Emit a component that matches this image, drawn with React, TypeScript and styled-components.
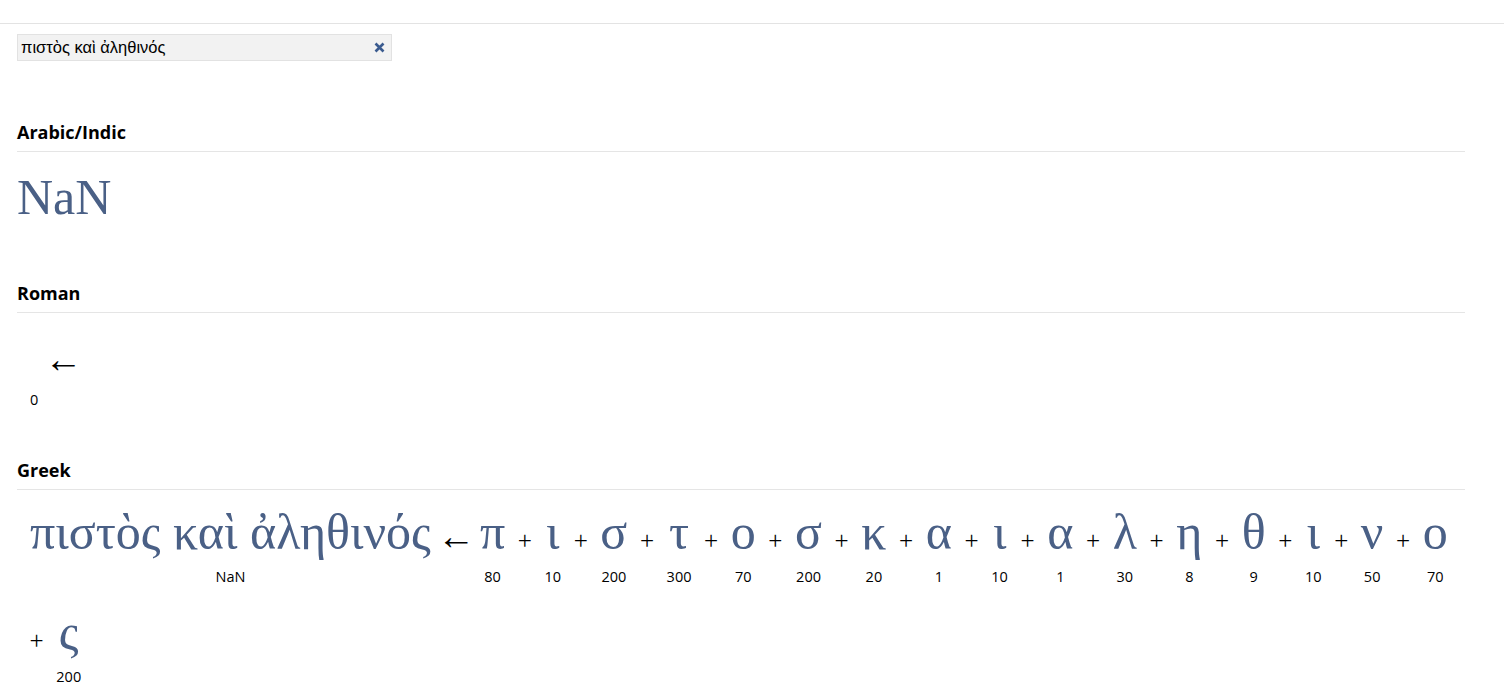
import React from "react";
import styled, { createGlobalStyle } from "styled-components";

const Global = createGlobalStyle`
  html, body { margin: 0; padding: 0; background: #fff; overflow: hidden; }
  body { font-family: "Open Sans", "Noto Sans", sans-serif; color: #000; }
`;

const TopBar = styled.header`
  height: 23px;
  border-bottom: 1px solid #e3e3e3;
`;

const Main = styled.main`
  display: flex;
  flex-direction: column;
  padding: 0 39px 0 17px;
`;

const SearchBox = styled.div`
  display: flex;
  align-items: center;
  width: 375px;
  height: 27px;
  box-sizing: border-box;
  margin: 10px 0 21px;
  padding: 0 6px 0 3px;
  background: #f2f2f2;
  border: 1px solid #e2e2e2;
`;

const SearchInput = styled.input`
  flex: 1;
  min-width: 0;
  border: 0;
  padding: 0;
  background: transparent;
  outline: none;
  font: 16.5px "Liberation Sans", Arial, sans-serif;
  color: #000;
`;

const ClearButton = styled.button`
  display: flex;
  align-items: center;
  justify-content: center;
  width: 12px;
  height: 12px;
  padding: 0;
  border: 0;
  background: transparent;
  color: #3b5b8f;
  cursor: pointer;
`;

const Heading = styled.h2`
  margin: 38px 0 0;
  padding: 0 0 7px;
  font: 700 18px/24px "Open Sans", "Noto Sans", sans-serif;
  border-bottom: 1px solid #e5e5e5;
`;

const BigValue = styled.div`
  margin: 10px 0 11px;
  font: 50px/70px "Liberation Serif", "DejaVu Serif", serif;
  color: #4a6086;
`;

const Row = styled.div`
  display: flex;
  flex-wrap: wrap;
  align-items: flex-start;
  row-gap: 10px;
  margin: 7px 0 10px;
`;

const Item = styled.div<{ $pad?: string }>`
  display: flex;
  flex-direction: column;
  align-items: center;
  padding: ${(p) => p.$pad ?? "0"};
`;

const Glyph = styled.span`
  display: block;
  height: 70px;
  font: 50px/70px "Liberation Serif", "DejaVu Serif", serif;
  color: #4a6086;
  white-space: pre;
`;

const OpMark = styled.span<{ $size: number }>`
  font-family: "Liberation Serif", serif;
  font-size: ${(p) => p.$size}px;
  line-height: 1;
  color: #000;
`;

const Label = styled.span`
  display: block;
  height: 20px;
  font: 14.5px/20px "Open Sans", "Noto Sans", sans-serif;
  color: #000;
`;

const letters: [string, number][] = [
  ["π", 80], ["ι", 10], ["σ", 200], ["τ", 300], ["ο", 70], ["σ", 200],
  ["κ", 20], ["α", 1], ["ι", 10], ["α", 1], ["λ", 30], ["η", 8],
  ["θ", 9], ["ι", 10], ["ν", 50], ["ο", 70], ["ς", 200],
];

const Op = ({ mark, size, pad }: { mark: string; size: number; pad: string }) => (
  <Item $pad={pad}>
    <Glyph>
      <OpMark $size={size}>{mark}</OpMark>
    </Glyph>
  </Item>
);

const Arrow = () => <Op mark="←" size={38} pad="0 5px 0 6px" />;
const Plus = () => <Op mark="+" size={25} pad="0 12.6px" />;

const Word = ({ text, value }: { text: string; value: string }) => (
  <Item $pad="0 0 0 13px">
    <Glyph>{text}</Glyph>
    <Label>{value}</Label>
  </Item>
);

const Letter = ({ ch, value }: { ch: string; value: number }) => (
  <Item>
    <Glyph>{ch}</Glyph>
    <Label>{value}</Label>
  </Item>
);

export default function App() {
  const word = "πιστὸς καὶ ἀληθινός";
  return (
    <>
      <Global />
      <TopBar />
      <Main>
        <SearchBox>
          <SearchInput defaultValue={word} />
          <ClearButton aria-label="clear">
            <svg width="11" height="11" viewBox="0 0 11 11">
              <path d="M1.5 1.5 L9.5 9.5 M9.5 1.5 L1.5 9.5" stroke="currentColor" strokeWidth="2.6" strokeLinecap="butt" />
            </svg>
          </ClearButton>
        </SearchBox>

        <Heading>Arabic/Indic</Heading>
        <BigValue>NaN</BigValue>

        <Heading>Roman</Heading>
        <Row>
          <Word text="" value="0" />
          <Arrow />
        </Row>

        <Heading>Greek</Heading>
        <Row>
          <Word text={word} value="NaN" />
          <Arrow />
          {letters.map(([ch, v], i) => (
            <React.Fragment key={i}>
              {i > 0 && <Plus />}
              <Letter ch={ch} value={v} />
            </React.Fragment>
          ))}
        </Row>
      </Main>
    </>
  );
}
